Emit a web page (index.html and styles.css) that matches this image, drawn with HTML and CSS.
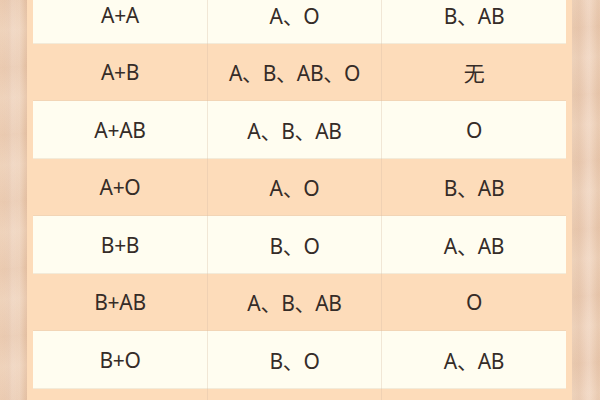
FILE: index.html
```html
<!DOCTYPE html>
<html lang="zh">
<head>
<meta charset="utf-8">
<title>血型遗传表</title>
<link rel="stylesheet" href="styles.css">
</head>
<body>
<div class="sheet">
  <div class="row light"><div class="cell">A+A</div><div class="cell">A、O</div><div class="cell">B、AB</div></div>
  <div class="row"><div class="cell">A+B</div><div class="cell">A、B、AB、O</div><div class="cell">无</div></div>
  <div class="row light"><div class="cell">A+AB</div><div class="cell">A、B、AB</div><div class="cell">O</div></div>
  <div class="row"><div class="cell">A+O</div><div class="cell">A、O</div><div class="cell">B、AB</div></div>
  <div class="row light"><div class="cell">B+B</div><div class="cell">B、O</div><div class="cell">A、AB</div></div>
  <div class="row"><div class="cell">B+AB</div><div class="cell">A、B、AB</div><div class="cell">O</div></div>
  <div class="row light"><div class="cell">B+O</div><div class="cell">B、O</div><div class="cell">A、AB</div></div>
  <div class="row"><div class="cell"></div><div class="cell"></div><div class="cell"></div></div>
</div>
</body>
</html>
```
FILE: styles.css
```css
html, body {
  margin: 0;
  height: 100%;
  overflow: hidden;
}
body {
  background-color: #ebccb3;
  background-image:
    repeating-linear-gradient(90deg, rgba(255,240,228,0.18) 0px, rgba(255,240,228,0) 5px, rgba(205,160,130,0.10) 9px, rgba(255,240,228,0) 14px, rgba(255,240,228,0.14) 19px),
    repeating-linear-gradient(176deg, rgba(215,170,140,0.10) 0px, rgba(255,242,230,0.16) 31px, rgba(215,170,140,0.08) 67px),
    linear-gradient(90deg, #e8c5a8 0%, #f0d7c3 2%, #e6c3a6 4.5%, #efd8c6 50%, #e8c8ad 95.5%, #eed2bd 98%, #e9c9ae 100%);
  font-family: "Noto Sans", "Noto Sans CJK SC", sans-serif;
}
.sheet {
  margin: -14px 28px 0 27px;
  padding: 0 6px;
  background: #fddcba;
}
.row {
  display: grid;
  grid-template-columns: 174px 174px 1fr;
  height: 57.5px;
  box-shadow: inset 0 -1px 0 rgba(220,200,175,0.35);
}
.row.light {
  background: #fffdf0;
}
.cell {
  display: flex;
  align-items: center;
  justify-content: center;
  font-size: 21px;
  color: #352c28;
  letter-spacing: -0.3px;
}
.cell + .cell {
  border-left: 1px solid rgba(215,190,165,0.35);
}
```
